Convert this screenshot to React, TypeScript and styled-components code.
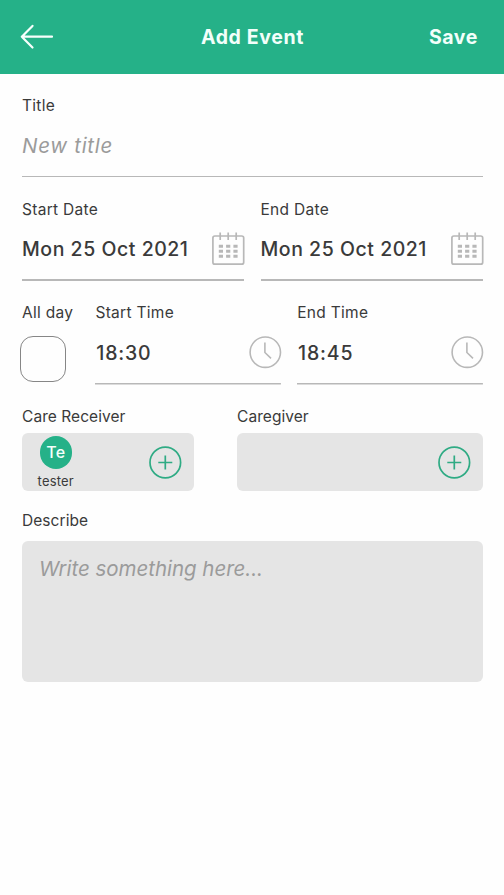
import React from "react";
import styled, { createGlobalStyle } from "styled-components";

const GREEN = "#25b188";
const LINE = "#b8b8b8";

const GlobalStyle = createGlobalStyle`
  * { box-sizing: border-box; }
  body {
    margin: 0;
    background: #fefefe;
    font-family: Inter, "Liberation Sans", sans-serif;
    color: #3a3a3a;
  }
  button { padding: 0; border: 0; background: none; font: inherit; color: inherit; }
`;

const Screen = styled.div`
  min-height: 895px;
  background: #fefefe;
`;

const Header = styled.header`
  display: grid;
  grid-template-columns: 1fr auto 1fr;
  align-items: center;
  height: 74px;
  padding: 0 26px 0 20px;
  background: ${GREEN};
  color: #f2fffa;
`;

const BackButton = styled.button`
  display: flex;
  justify-self: start;
`;

const HeaderTitle = styled.h1`
  margin: 0 0 0 7px;
  font-size: 19.5px;
  font-weight: 700;
  line-height: 24px;
  letter-spacing: 0.65px;
`;

const SaveButton = styled.button`
  && {
    justify-self: end;
    font-size: 19.5px;
    font-weight: 700;
    line-height: 24px;
    letter-spacing: 0.6px;
  }
`;

const Form = styled.main`
  display: flex;
  flex-direction: column;
  padding: 21px 21px 0 22px;
`;

const Row = styled.div<{ $columns?: string; $gap?: number }>`
  display: grid;
  grid-template-columns: ${(p) => p.$columns ?? "1fr"};
  column-gap: ${(p) => p.$gap ?? 0}px;
  height: 103.65px;
`;

const Field = styled.div`
  display: flex;
  flex-direction: column;
  min-width: 0;
`;

const Label = styled.label<{ $tight?: boolean }>`
  height: 20px;
  padding-top: 1px;
  font-size: 15.5px;
  line-height: 20px;
  letter-spacing: ${(p) => (p.$tight ? 0.06 : 0.3)}px;
  white-space: nowrap;
`;

const Control = styled.div<{ $rule?: number }>`
  display: flex;
  align-items: center;
  justify-content: space-between;
  height: 62.4px;
  padding-bottom: 1px;
  background: linear-gradient(${LINE}, ${LINE}) bottom / 100% ${(p) => p.$rule ?? 1.5}px no-repeat;
  svg { margin-right: -1px; flex: none; }
`;

const Value = styled.span<{ $time?: boolean }>`
  padding-left: ${(p) => (p.$time ? 0.8 : 0)}px;
  font-size: 19.5px;
  font-weight: 500;
  line-height: 24px;
  letter-spacing: ${(p) => (p.$time ? 0.85 : 0.53)}px;
  padding-bottom: ${(p) => (p.$time ? 0 : 1)}px;
  white-space: nowrap;
`;

const Placeholder = styled.span<{ $spacing: number }>`
  font-size: 20.5px;
  font-style: italic;
  line-height: 26px;
  letter-spacing: ${(p) => p.$spacing}px;
  color: #9b9b9b;
`;

const Checkbox = styled.div`
  width: 46px;
  height: 46px;
  margin: 13.6px 0 0 -2px;
  border: 1px solid #868686;
  border-radius: 13px;
`;

const Panel = styled.div`
  display: flex;
  align-items: center;
  justify-content: space-between;
  height: 57.5px;
  margin-top: 7.5px;
  padding: 0 12px 0 15.6px;
  border-radius: 6px;
  background: #e5e5e5;
`;

const Person = styled.div`
  display: flex;
  flex-direction: column;
  align-items: center;
  gap: 4px;
  padding-top: 2px;
  font-size: 13px;
  line-height: 17px;
  letter-spacing: 0.2px;
`;

const Avatar = styled.div`
  display: grid;
  place-items: center;
  width: 32.5px;
  height: 32.5px;
  border-radius: 50%;
  background: ${GREEN};
  color: #f4fffb;
  font-size: 16px;
  font-weight: 500;
  letter-spacing: 0.3px;
`;

const AddButton = styled.button`
  display: flex;
  margin-left: auto;
`;

const Notes = styled.div`
  height: 141.5px;
  margin-top: 11px;
  padding: 15px 17px;
  border-radius: 6px;
  background: #e5e5e5;
  line-height: 26px;
`;

const BackIcon = () => (
  <svg width="34" height="26" viewBox="0 0 34 26" fill="none" stroke="#f7fffc" strokeWidth="2.2" strokeLinecap="round" strokeLinejoin="round">
    <path d="M32 12.7H1.8M12.5 1.9L1.8 12.7L12.5 23.5" />
  </svg>
);

const CalendarIcon = () => (
  <svg width="33" height="34" viewBox="0 0 33 34" fill="none" stroke={LINE} strokeWidth="1.7">
    <rect x="0.9" y="4" width="30.8" height="28.2" rx="2" />
    <path d="M8.2 0.5V8M16.2 0.5V8M24.2 0.5V8" strokeWidth="1.7" />
    <path d="M6.8 14.3H25.8M6.8 19.3H25.8M6.8 24.3H25.8" strokeWidth="3" strokeDasharray="4.2 3.1" />
  </svg>
);

const ClockIcon = () => (
  <svg width="33" height="33" viewBox="0 0 33 33" fill="none" stroke={LINE} strokeWidth="1.6">
    <circle cx="16.3" cy="16.2" r="15.2" />
    <path d="M15.9 6.4V16.5L22 22.3" />
  </svg>
);

const PlusIcon = () => (
  <svg width="33" height="33" viewBox="0 0 33 33" fill="none" stroke="#2fab84" strokeWidth="1.7">
    <circle cx="16.3" cy="16.5" r="15.3" />
    <path d="M9.3 16.5H23.3M16.3 9.5V23.5" />
  </svg>
);

type PickerProps = { label: string; value: string; time?: boolean };

const Picker = ({ label, value, time }: PickerProps) => (
  <Field>
    <Label>{label}</Label>
    <Control $rule={time ? 1.5 : 2}>
      <Value $time={time}>{value}</Value>
      {time ? <ClockIcon /> : <CalendarIcon />}
    </Control>
  </Field>
);

export default function App() {
  return (
    <Screen>
      <GlobalStyle />
      <Header>
        <BackButton aria-label="Back"><BackIcon /></BackButton>
        <HeaderTitle>Add Event</HeaderTitle>
        <SaveButton>Save</SaveButton>
      </Header>
      <Form>
        <Row>
          <Field>
            <Label>Title</Label>
            <Control><Placeholder $spacing={0.7}>New title</Placeholder></Control>
          </Field>
        </Row>
        <Row $columns="222px 1fr" $gap={16.5}>
          <Picker label="Start Date" value="Mon 25 Oct 2021" />
          <Picker label="End Date" value="Mon 25 Oct 2021" />
        </Row>
        <Row $columns="57.4px 1fr 1fr" $gap={16}>
          <Field>
            <Label>All day</Label>
            <Checkbox role="checkbox" aria-checked="false" />
          </Field>
          <Picker label="Start Time" value="18:30" time />
          <Picker label="End Time" value="18:45" time />
        </Row>
        <Row $columns="171.5px 1fr" $gap={43.5}>
          <Field>
            <Label $tight>Care Receiver</Label>
            <Panel>
              <Person>
                <Avatar>Te</Avatar>
                tester
              </Person>
              <AddButton aria-label="Add care receiver"><PlusIcon /></AddButton>
            </Panel>
          </Field>
          <Field>
            <Label $tight>Caregiver</Label>
            <Panel>
              <AddButton aria-label="Add caregiver"><PlusIcon /></AddButton>
            </Panel>
          </Field>
        </Row>
        <Field>
          <Label $tight>Describe</Label>
          <Notes><Placeholder $spacing={-0.03}>Write something here...</Placeholder></Notes>
        </Field>
      </Form>
    </Screen>
  );
}
